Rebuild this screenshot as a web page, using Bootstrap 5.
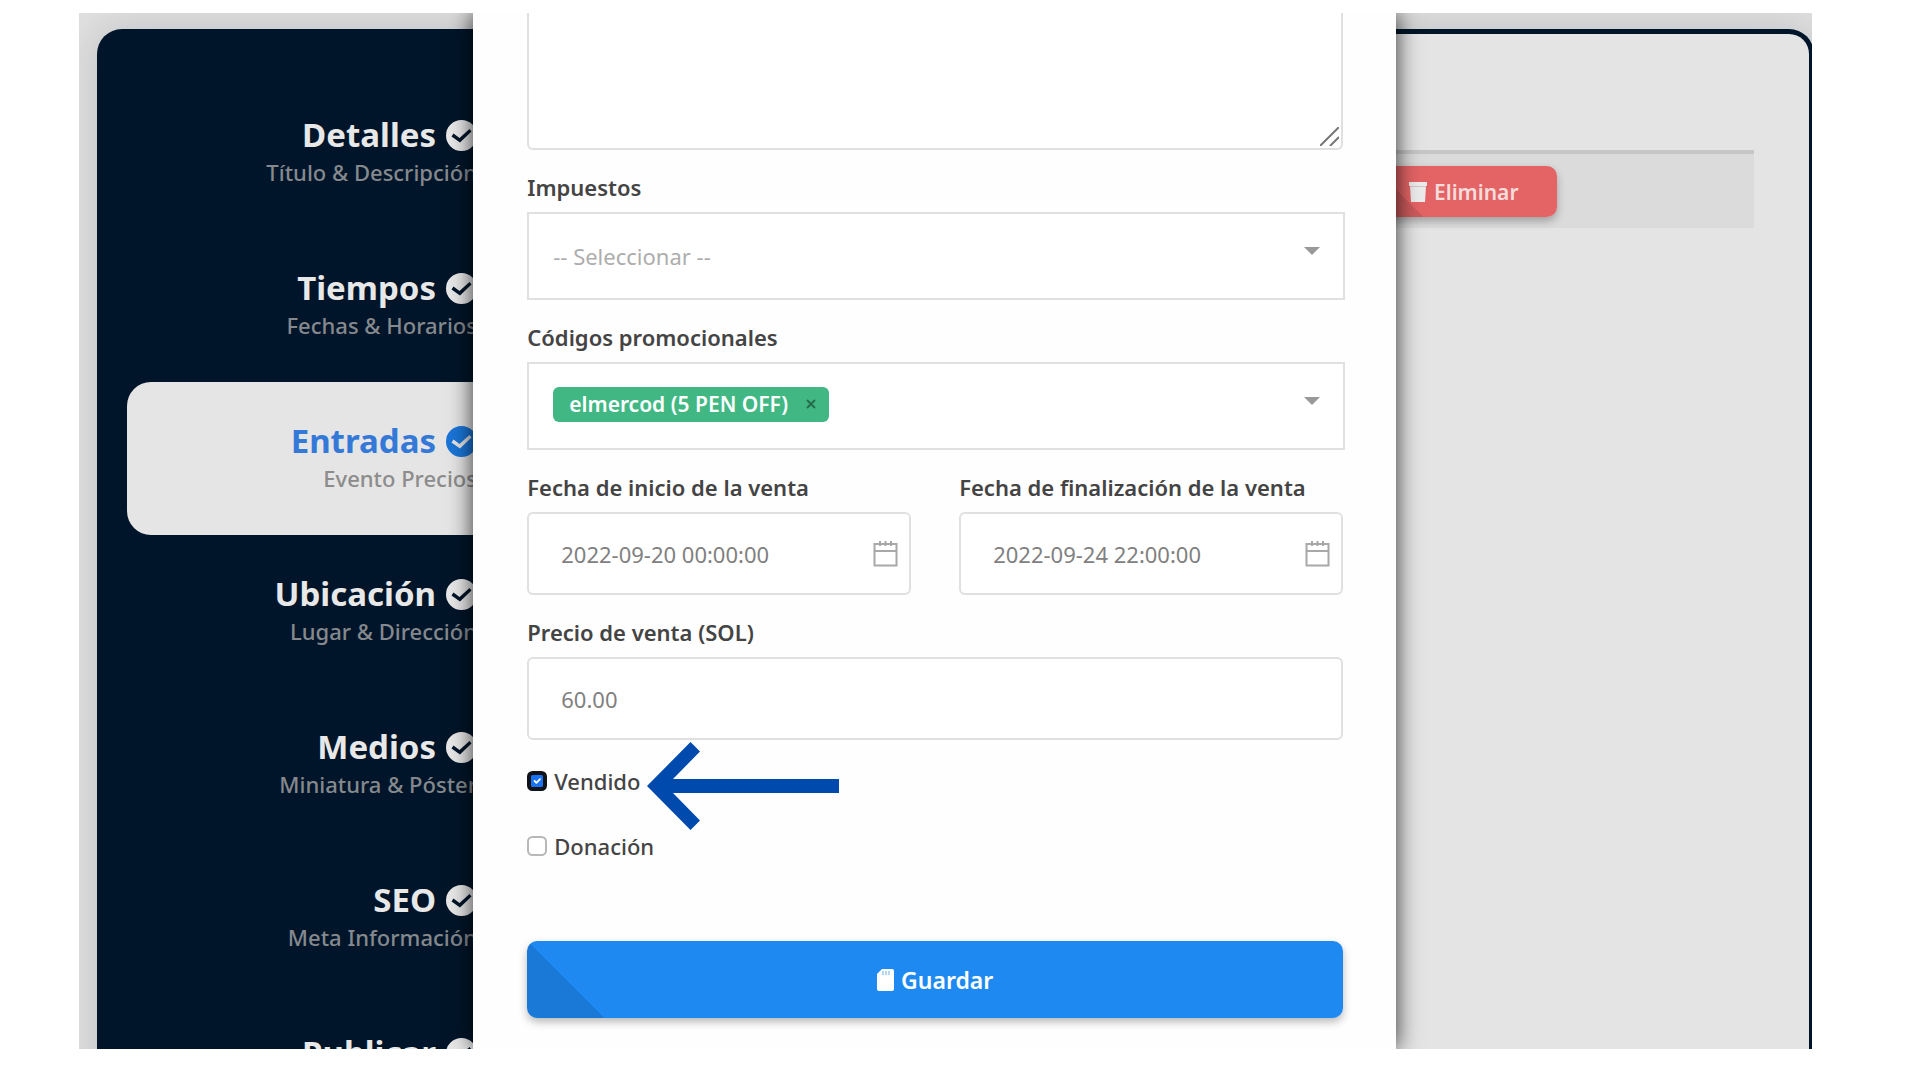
<!DOCTYPE html>
<html lang="es">
<head>
<meta charset="utf-8">
<meta name="viewport" content="width=device-width, initial-scale=1">
<title>Entradas</title>
<link href="https://cdn.jsdelivr.net/npm/bootstrap@5.3.0/dist/css/bootstrap.min.css" rel="stylesheet">
<style>
  body { font-family: "Noto Sans", "Open Sans", sans-serif; font-size: 22px; line-height: 30px; color: #444; background: #fff; }
  .stage { height: 100vh; padding: 13px 108px 31px 79px; overflow: hidden; }
  .app-frame { background: #dfdfdf; height: 100%; }
  .panel { margin: 16px -2px 0 18px; min-height: 100%; background: #001529; border-radius: 25px; box-shadow: 0 0 36px rgba(0, 20, 40, .15); }
  .side { width: 400px; padding: 47px 0 0 30px; flex: none; }
  .step { display: block; padding: 38px 20px 41px 0; border-radius: 24px 0 0 24px; text-align: right; text-decoration: none; color: #85898e; white-space: nowrap; }
  .step-title { font-size: 33px; line-height: 42px; font-weight: 700; color: #e8e8e8; gap: 10px; }
  .step-title svg { width: 31px; height: 31px; flex: none; }
  .step-sub { line-height: 32px; font-weight: 500; }
  .step.active { background: #e5e5e5; color: #8c8c8c; }
  .step.active .step-title { color: #3478d8; }
  .step.active svg { color: #1a75d8; }
  .content { background: #e4e4e4; border-radius: 0 20px 0 0; margin: 5px 5px 0 0; padding: 116px 55px 0 40px; min-width: 0; }
  .tickets { width: 100%; border-top: 4px solid #c6c6c6; }
  .tickets td { background: #dbdbdb; padding: 12px 0 11px; }
  .col-action { width: 383px; }
  .btn-action { border: 0; border-radius: 10px; font-weight: 600; color: #fff; box-shadow: 0 4px 8px rgba(0, 0, 0, .28); display: inline-flex; align-items: center; justify-content: center; gap: 7px; }
  .btn-remove { height: 51px; padding: 0 38px; font-size: 21px; color: #f3dcdc; background: linear-gradient(45deg, #cc5a5b 37px, #e46465 37px); }
  .btn-save { height: 77px; font-size: 23px; background: linear-gradient(45deg, #1a78d6 55px, #1e8af1 55px); margin-top: 80px; }
  .sheet { left: 22.75%; width: 53.25%; background: #fefefe; padding: 0 53px 0 54px; box-shadow: 0 0 22px rgba(0, 0, 0, .8); }
  .field { margin-bottom: 22px; }
  .field-label { display: block; font-weight: 600; margin-bottom: 10px; }
  .box { display: block; width: 100%; height: 83px; border: 2px solid #e0e0e0; border-radius: 6px; background: #fff; padding: 0 32px; font-size: 22px; color: #808080; outline: 0; }
  .box-area { height: 137px; border-top: 0; border-radius: 0 0 6px 6px; resize: none; }
  .box-pick { width: calc(100% + 2px); height: 88px; border-radius: 0; padding: 0 24px; appearance: none; color: #adadad;
    background: #fff url("data:image/svg+xml,%3Csvg xmlns='http://www.w3.org/2000/svg' viewBox='0 0 16 8'%3E%3Cpath d='M0 0h16L8 8z' fill='%23999'/%3E%3C/svg%3E") no-repeat right 23px top 33px / 16px 8px; }
  .box-tags { padding-bottom: 4px; }
  .box-pick input { border: 0; outline: 0; background: none; min-width: 0; }
  .chip { background: #41b883; color: #fff; font-size: 21px; font-weight: 600; border-radius: 6px; height: 35px; padding: 0 13px 0 16px; gap: 18px; white-space: nowrap; }
  .chip button { border: 0; padding: 0; background: none; color: #266d4d; display: flex; }
  .grip { right: 4px; bottom: 4px; }
  .cal { right: 13px; top: 29px; }
  .dates { --bs-gutter-x: 48px; }
  .ticks { padding-top: 4px; }
  .tick { width: 20px; height: 20px; margin: 0; border: 2px solid #b8b8b8; border-radius: 4px; flex: none; }
  .tick:checked { border: 4px solid #101418; background-color: #1a73f5; }
  .tick-row { gap: 7px; font-weight: 500; line-height: 30px; }
  .tick-row + .tick-row { margin-top: 35px; }
  .pointer { left: 120px; top: -24px; }
</style>
</head>
<body>
<svg class="d-none">
  <symbol id="check" viewBox="0 0 31 31"><path fill="currentColor" fill-rule="evenodd" d="M15.500 0a15.500 15.500 0 1 0 0 31a15.500 15.500 0 0 0 0-31zM14 22.500L5.500 16.500L7.500 13.500L13.500 18L23.500 9L25.500 11.500z"/></symbol>
  <symbol id="calendar" viewBox="0 0 25 26"><path fill="none" stroke="#a8a8a8" stroke-width="2" d="M1.500 3h22v21.500h-22zM1.500 10h22M7 0v5M12.500 0v5M18 0v5"/></symbol>
</svg>
<div class="stage">
  <div class="app-frame position-relative overflow-hidden">
    <div class="panel d-flex">
      <nav class="side">
        <a class="step" href="#"><span class="step-title d-flex align-items-center justify-content-end">Detalles <svg><use href="#check"/></svg></span><span class="step-sub d-block">Título &amp; Descripción</span></a>
        <a class="step" href="#"><span class="step-title d-flex align-items-center justify-content-end">Tiempos <svg><use href="#check"/></svg></span><span class="step-sub d-block">Fechas &amp; Horarios</span></a>
        <a class="step active" href="#"><span class="step-title d-flex align-items-center justify-content-end">Entradas <svg><use href="#check"/></svg></span><span class="step-sub d-block">Evento Precios</span></a>
        <a class="step" href="#"><span class="step-title d-flex align-items-center justify-content-end">Ubicación <svg><use href="#check"/></svg></span><span class="step-sub d-block">Lugar &amp; Dirección</span></a>
        <a class="step" href="#"><span class="step-title d-flex align-items-center justify-content-end">Medios <svg><use href="#check"/></svg></span><span class="step-sub d-block">Miniatura &amp; Póster</span></a>
        <a class="step" href="#"><span class="step-title d-flex align-items-center justify-content-end">SEO <svg><use href="#check"/></svg></span><span class="step-sub d-block">Meta Información</span></a>
        <a class="step" href="#"><span class="step-title d-flex align-items-center justify-content-end">Publicar <svg><use href="#check"/></svg></span></a>
      </nav>
      <main class="content flex-grow-1">
        <table class="tickets">
          <tbody>
            <tr>
              <td></td>
              <td class="col-action">
                <button type="button" class="btn-action btn-remove">
                  <svg width="18" height="20" viewBox="0 0 18 20" fill="#ececec"><path d="M0 0h18v4h-1l-1 16H2L1 4H0z"/><path d="M1 4.500h16" stroke="#d9c4c4"/></svg>
                  Eliminar
                </button>
              </td>
            </tr>
          </tbody>
        </table>
      </main>
    </div>

    <form class="sheet position-absolute top-0 h-100">
      <div class="field position-relative">
        <textarea class="box box-area" aria-label="Descripción"></textarea>
        <svg class="grip position-absolute" width="19" height="19" viewBox="0 0 19 19" stroke="#777" stroke-width="2"><path d="M0 19L19 0M10 19L19 10"/></svg>
      </div>
      <div class="field">
        <label class="field-label" for="taxes">Impuestos</label>
        <select class="box box-pick" id="taxes"><option>-- Seleccionar --</option></select>
      </div>
      <div class="field">
        <label class="field-label" for="promo">Códigos promocionales</label>
        <div class="box box-pick box-tags d-flex align-items-center">
          <span class="chip d-inline-flex align-items-center">elmercod (5 PEN OFF)
            <button type="button" aria-label="Quitar"><svg width="10" height="10" viewBox="0 0 10 10" stroke="currentColor" stroke-width="2"><path d="M1 1l8 8M9 1L1 9"/></svg></button>
          </span>
          <input class="flex-grow-1" type="text" id="promo">
        </div>
      </div>
      <div class="row dates">
        <div class="col-6 field">
          <label class="field-label" for="start">Fecha de inicio de la venta</label>
          <div class="position-relative">
            <input class="box" type="text" id="start" value="2022-09-20 00:00:00">
            <svg class="cal position-absolute" width="25" height="26"><use href="#calendar"/></svg>
          </div>
        </div>
        <div class="col-6 field">
          <label class="field-label" for="end">Fecha de finalización de la venta</label>
          <div class="position-relative">
            <input class="box" type="text" id="end" value="2022-09-24 22:00:00">
            <svg class="cal position-absolute" width="25" height="26"><use href="#calendar"/></svg>
          </div>
        </div>
      </div>
      <div class="field">
        <label class="field-label" for="price">Precio de venta (SOL)</label>
        <input class="box" type="text" id="price" value="60.00">
      </div>
      <div class="ticks">
        <div class="tick-row d-flex align-items-center position-relative">
          <input class="form-check-input tick" type="checkbox" id="sold" checked>
          <label for="sold">Vendido</label>
          <svg class="pointer position-absolute" width="192" height="88" viewBox="0 0 192 88" fill="#004aad"><path d="M0 44L43.500 0L53 9.500L26 37H192V51H26L53 78.500L43.500 88z"/></svg>
        </div>
        <div class="tick-row d-flex align-items-center">
          <input class="form-check-input tick" type="checkbox" id="donation">
          <label for="donation">Donación</label>
        </div>
      </div>
      <button type="submit" class="btn-action btn-save w-100">
        <svg width="17" height="22" viewBox="0 0 17 22"><path fill="#fff" d="M5 0h10a2 2 0 0 1 2 2v18a2 2 0 0 1-2 2H2a2 2 0 0 1-2-2V5z"/><path stroke="#9ccbf8" stroke-width="1.500" d="M6 2v4M9 2v4M12 2v4"/></svg>
        Guardar
      </button>
    </form>
  </div>
</div>
<script src="https://cdn.jsdelivr.net/npm/bootstrap@5.3.0/dist/js/bootstrap.bundle.min.js"></script>
</body>
</html>
